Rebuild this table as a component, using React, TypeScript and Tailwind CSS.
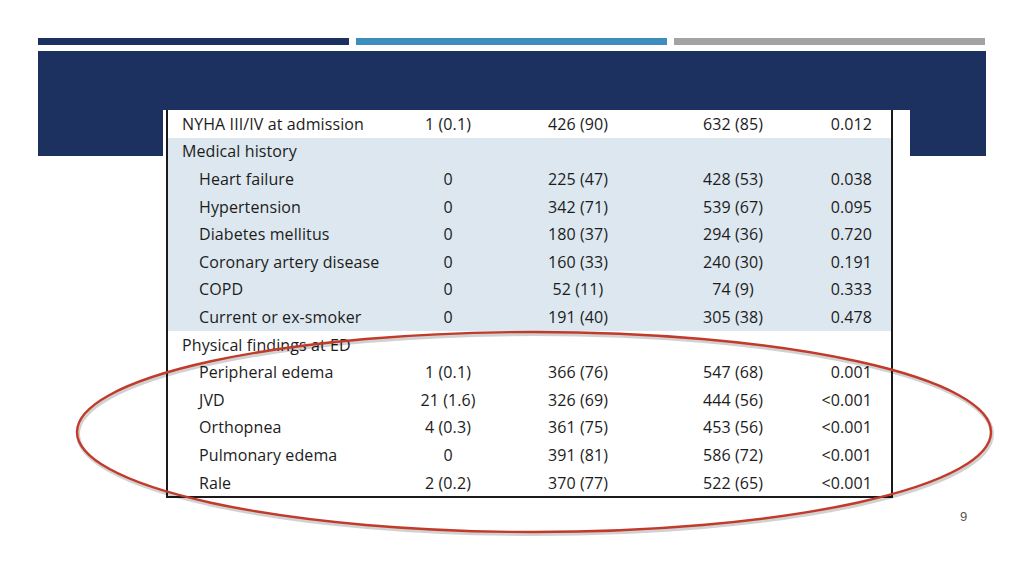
import React from 'react';

type Row = {
  label: string;
  indent?: boolean;
  section?: boolean;
  shaded?: boolean;
  c1?: string;
  c2?: string;
  c3?: string;
  p?: string;
};

const rows: Row[] = [
  { label: 'NYHA III/IV at admission', c1: '1 (0.1)', c2: '426 (90)', c3: '632 (85)', p: '0.012' },
  { label: 'Medical history', section: true, shaded: true },
  { label: 'Heart failure', indent: true, shaded: true, c1: '0', c2: '225 (47)', c3: '428 (53)', p: '0.038' },
  { label: 'Hypertension', indent: true, shaded: true, c1: '0', c2: '342 (71)', c3: '539 (67)', p: '0.095' },
  { label: 'Diabetes mellitus', indent: true, shaded: true, c1: '0', c2: '180 (37)', c3: '294 (36)', p: '0.720' },
  { label: 'Coronary artery disease', indent: true, shaded: true, c1: '0', c2: '160 (33)', c3: '240 (30)', p: '0.191' },
  { label: 'COPD', indent: true, shaded: true, c1: '0', c2: '52 (11)', c3: '74 (9)', p: '0.333' },
  { label: 'Current or ex-smoker', indent: true, shaded: true, c1: '0', c2: '191 (40)', c3: '305 (38)', p: '0.478' },
  { label: 'Physical findings at ED', section: true },
  { label: 'Peripheral edema', indent: true, c1: '1 (0.1)', c2: '366 (76)', c3: '547 (68)', p: '0.001' },
  { label: 'JVD', indent: true, c1: '21 (1.6)', c2: '326 (69)', c3: '444 (56)', p: '<0.001' },
  { label: 'Orthopnea', indent: true, c1: '4 (0.3)', c2: '361 (75)', c3: '453 (56)', p: '<0.001' },
  { label: 'Pulmonary edema', indent: true, c1: '0', c2: '391 (81)', c3: '586 (72)', p: '<0.001' },
  { label: 'Rale', indent: true, c1: '2 (0.2)', c2: '370 (77)', c3: '522 (65)', p: '<0.001' },
];

const App: React.FC = () => {
  return (
    <div className="relative w-[1024px] h-[576px] bg-white overflow-hidden font-['Open_Sans',sans-serif]">
      {/* 上方三條色帶 */}
      <div className="flex gap-[7px] pt-[38px] px-[38px]">
        <div className="w-[311px] h-[7px] bg-[#1c315f]" />
        <div className="w-[311px] h-[7px] bg-[#3d8dbd]" />
        <div className="w-[311px] h-[7px] bg-[#a3a3a3]" />
      </div>

      {/* 標題區塊 */}
      <div className="mx-[38px] mt-[6px] h-[105px] bg-[#1c315f]" />

      {/* 表格圖片 */}
      <div className="relative ml-[163px] w-[747px] -mt-[46px] bg-white pl-[3px] pr-[17px]">
        <div className="border-l-2 border-r-2 border-b-2 border-[#1a1a1a] text-[16px] text-[#1c1c1c] tracking-[0.1px]">
          {rows.map((r) => (
            <div
              key={r.label}
              className={`flex items-center h-[27.6px] ${r.shaded ? 'bg-[#dde7ef]' : 'bg-white'}`}
            >
              <div className={`w-[220px] whitespace-nowrap ${r.indent ? 'pl-[31px]' : 'pl-[14px]'}`}>
                {r.label}
              </div>
              <div className="w-[120px] text-center">{r.c1}</div>
              <div className="w-[140px] text-center">{r.c2}</div>
              <div className="w-[170px] text-center">{r.c3}</div>
              <div className="flex-1 text-right pr-[19px]">{r.p}</div>
            </div>
          ))}
        </div>
      </div>

      {/* 頁碼 */}
      <div className="absolute left-[960px] top-[507px] text-[13px] text-[#555] font-['Liberation_Sans',sans-serif]">
        9
      </div>

      {/* 紅色圈選 */}
      <svg className="absolute inset-0 pointer-events-none" width="1024" height="576" viewBox="0 0 1024 576">
        <ellipse cx="534" cy="432" rx="457" ry="100" fill="none" stroke="#000" strokeOpacity="0.18" strokeWidth="4" transform="translate(1 2)" />
        <ellipse cx="534" cy="432" rx="457" ry="100" fill="none" stroke="#c23a2a" strokeWidth="2.4" />
      </svg>
    </div>
  );
};

export default App;
